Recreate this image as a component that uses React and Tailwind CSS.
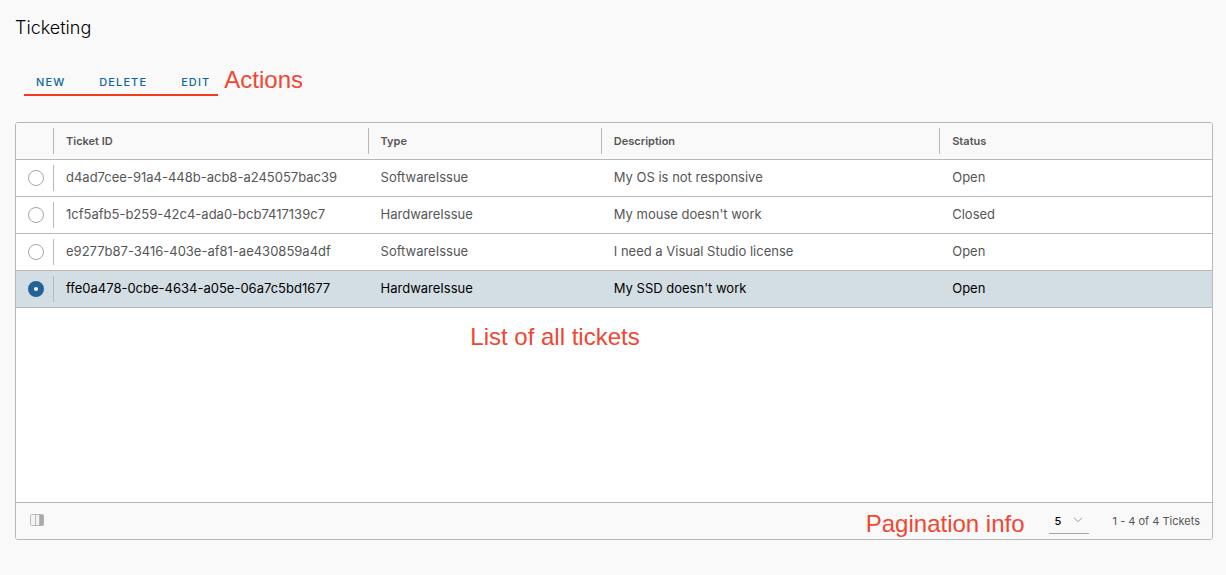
import { useState } from "react";

const tickets = [
  { id: "d4ad7cee-91a4-448b-acb8-a245057bac39", type: "SoftwareIssue", description: "My OS is not responsive", status: "Open" },
  { id: "1cf5afb5-b259-42c4-ada0-bcb7417139c7", type: "HardwareIssue", description: "My mouse doesn't work", status: "Closed" },
  { id: "e9277b87-3416-403e-af81-ae430859a4df", type: "SoftwareIssue", description: "I need a Visual Studio license", status: "Open" },
  { id: "ffe0a478-0cbe-4634-a05e-06a7c5bd1677", type: "HardwareIssue", description: "My SSD doesn't work", status: "Open" },
];

function Note({ children }) {
  return (
    <span className="font-['Liberation_Sans',sans-serif] text-2xl leading-6 whitespace-nowrap text-[#f04632]">
      {children}
    </span>
  );
}

function Action({ children }) {
  return (
    <button type="button" className="px-3 text-[11px] leading-6 font-medium tracking-widest text-[#0f67a2] uppercase last:pr-2">
      {children}
    </button>
  );
}

function HeaderCell({ children }) {
  return (
    <th scope="col" className="p-0 text-left font-semibold">
      <div className="flex h-[26px] items-center border-l border-[#b8b8b8] pl-3">{children}</div>
    </th>
  );
}

function TicketRow({ ticket, selected, onSelect }) {
  return (
    <tr className={selected ? "h-[37px] border-b border-[#b8b8b8] bg-[#d3dee4] text-black" : "h-[37px] border-b border-[#b8b8b8] text-[#565656]"}>
      <td className="p-0 pl-3">
        <input
          type="radio"
          name="ticket"
          aria-label={`Select ticket ${ticket.id}`}
          checked={selected}
          onChange={onSelect}
          className="block size-4 appearance-none rounded-full border border-[#a6a6a6] bg-white checked:border-[6px] checked:border-[#24629a]"
        />
      </td>
      <td className="p-0">
        <div className="flex h-[26px] items-center border-l border-[#b8b8b8] pl-3">{ticket.id}</div>
      </td>
      <td className="p-0 pl-[13px]">{ticket.type}</td>
      <td className="p-0 pl-[13px]">{ticket.description}</td>
      <td className="p-0 pl-[13px]">{ticket.status}</td>
    </tr>
  );
}

export default function App() {
  const [selectedId, setSelectedId] = useState(tickets[3].id);
  const [pageSize, setPageSize] = useState("5");

  return (
    <main className="flex min-h-screen flex-col bg-[#f9f9f9] pt-4 pr-[13px] pb-[35px] pl-[15px] font-[Inter,sans-serif] text-[13px] text-[#565656]">
      <h1 className="text-lg leading-6 font-light text-black">Ticketing</h1>

      <div className="mt-7 mb-[26px] flex items-start gap-1.5 pl-[9px]">
        <div className="flex gap-2.5 border-b-2 border-[#f23a1d] pt-0.5">
          <Action>New</Action>
          <Action>Delete</Action>
          <Action>Edit</Action>
        </div>
        <Note>Actions</Note>
      </div>

      <section aria-label="Tickets" className="flex flex-1 flex-col overflow-hidden rounded-[3px] border border-[#b8b8b8] bg-white">
        <table className="w-full table-fixed border-collapse">
          <colgroup>
            <col className="w-[37px]" />
            <col className="w-[26.3%]" />
            <col className="w-[19.5%]" />
            <col className="w-[28.3%]" />
            <col />
          </colgroup>
          <thead>
            <tr className="h-9 border-b border-[#b8b8b8] bg-[#f9f9f9] text-[11px]">
              <td className="p-0" />
              <HeaderCell>Ticket ID</HeaderCell>
              <HeaderCell>Type</HeaderCell>
              <HeaderCell>Description</HeaderCell>
              <HeaderCell>Status</HeaderCell>
            </tr>
          </thead>
          <tbody>
            {tickets.map((ticket) => (
              <TicketRow
                key={ticket.id}
                ticket={ticket}
                selected={ticket.id === selectedId}
                onSelect={() => setSelectedId(ticket.id)}
              />
            ))}
          </tbody>
        </table>

        <div className="flex min-h-20 flex-1 items-start justify-center pt-[17px] pr-[118px]">
          <Note>List of all tickets</Note>
        </div>

        <footer className="flex h-[37px] items-center border-t border-[#b8b8b8] bg-[#f9f9f9] pr-3 pb-0.5 pl-3.5 text-[11px]">
          <button type="button" aria-label="Manage columns">
            <svg width="14" height="12" viewBox="0 0 14 12" className="block">
              <rect x="0.5" y="0.5" width="13" height="11" rx="1" fill="#f4f4f4" stroke="#b8b8b8" />
              <rect x="9" y="1" width="4.5" height="10.5" fill="#a9a9a9" />
              <path d="M5.5 1v10M9.5 1v10" stroke="#b8b8b8" />
            </svg>
          </button>
          <div className="ml-auto flex items-center">
            <div className="pt-2">
              <Note>Pagination info</Note>
            </div>
            <div className="relative mt-1 ml-6">
              <select
                aria-label="Tickets per page"
                value={pageSize}
                onChange={(event) => setPageSize(event.target.value)}
                className="block h-6 w-10 appearance-none border-b border-[#a6a6a6] bg-transparent pl-1.5 text-[11px] font-medium text-black"
              >
                <option>5</option>
                <option>10</option>
                <option>20</option>
              </select>
              <svg width="10" height="6" viewBox="0 0 10 6" className="pointer-events-none absolute top-[7px] right-1.5" fill="none" stroke="#a0a0a0">
                <path d="M1 0.7 5 4.8 9 0.7" />
              </svg>
            </div>
            <span className="ml-6 pt-0.5">1 - 4 of 4 Tickets</span>
          </div>
        </footer>
      </section>
    </main>
  );
}
